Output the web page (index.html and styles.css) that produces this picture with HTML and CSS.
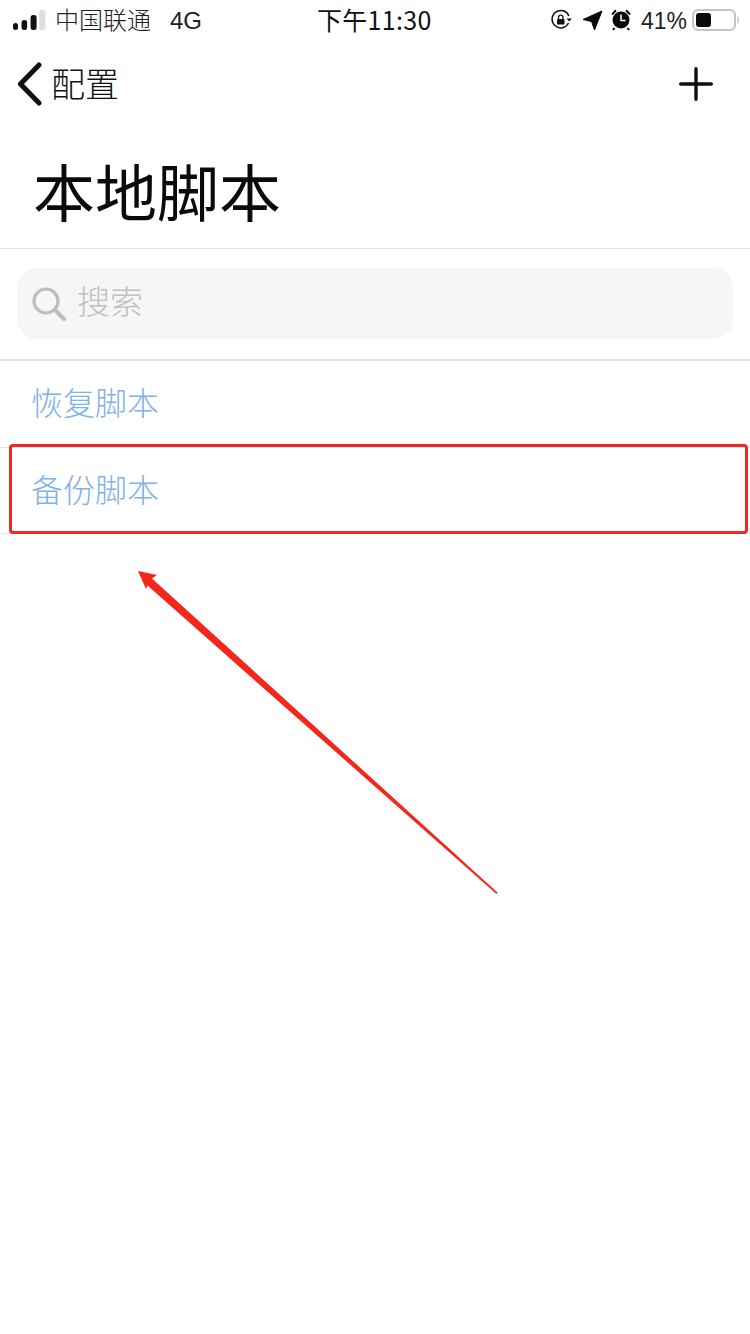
FILE: index.html
```html
<!DOCTYPE html>
<html lang="zh-CN">
<head>
<meta charset="utf-8">
<title>本地脚本</title>
<link rel="stylesheet" href="styles.css">
</head>
<body>
<main class="screen">
  <header class="status">
    <div class="status-left">
      <svg class="signal" width="34" height="22" viewBox="0 0 34 22"><rect x="0" y="13" width="5" height="7" rx="2.500" fill="#111"/><rect x="8.600" y="10" width="5.500" height="10" rx="2.500" fill="#111"/><rect x="17.600" y="5" width="6" height="15" rx="2.500" fill="#111"/><rect x="26.300" y="0" width="6" height="20" rx="2" fill="#dedede"/></svg>
      <span class="carrier">中国联通</span>
      <span class="net">4G</span>
    </div>
    <div class="time">下午11:30</div>
    <div class="status-right">
      <svg width="22" height="22" viewBox="0 0 22 22"><path d="M18.600 14A8.700 8.700 0 1 1 18.900 7" fill="none" stroke="#111" stroke-width="1.500"/><path d="M16.500 9.500h5.500l-2.800 3z" fill="#111"/><rect x="7" y="10" width="7.500" height="5.500" rx="1" fill="#111"/><path d="M8.500 10V8.300a2.200 2.200 0 0 1 4.500 0V10" fill="none" stroke="#111" stroke-width="1.300"/></svg>
      <svg class="loc" width="20" height="20" viewBox="0 0 20 20"><path d="M19 1 0 9.500l8.500 2 3 8.500z" fill="#0a0a0a" stroke="#0a0a0a" stroke-width="1" stroke-linejoin="round"/></svg>
      <svg class="alarm" width="20" height="24" viewBox="0 0 20 24"><circle cx="10" cy="12" r="8.500" fill="#0a0a0a"/><path d="M10 6.500v6h4.500" fill="none" stroke="#fff" stroke-width="1.500"/><path d="M1 6.500 5 2.200M19 6.500l-4-4.300M3.500 20 2 22M16.500 20l1.500 2" stroke="#0a0a0a" stroke-width="2"/></svg>
      <span class="pct">41%</span>
      <div class="battery"><div class="battery-level"></div></div>
      <div class="battery-cap"></div>
    </div>
  </header>

  <nav class="nav">
    <div class="back">
      <svg width="28" height="44" viewBox="0 0 28 44"><path d="M23 3 4.500 22 23 41" fill="none" stroke="#111" stroke-width="5" stroke-linecap="round" stroke-linejoin="round"/></svg>
      <span class="back-label">配置</span>
    </div>
    <svg class="plus" width="34" height="34" viewBox="0 0 34 34"><path d="M17 1.700v30.600M1.700 17h30.600" fill="none" stroke="#111" stroke-width="3.400" stroke-linecap="round"/></svg>
  </nav>

  <h1 class="title">本地脚本</h1>

  <section class="search-wrap">
    <div class="search">
      <svg width="34" height="34" viewBox="0 0 34 34"><circle cx="14" cy="14" r="12" fill="none" stroke="#bdbdbd" stroke-width="3.200"/><path d="M23 23l9 9" stroke="#bdbdbd" stroke-width="4" stroke-linecap="round"/></svg>
      <span class="search-text">搜索</span>
    </div>
  </section>

  <ul class="list">
    <li class="row">恢复脚本</li>
    <li class="row">备份脚本</li>
  </ul>

  <div class="highlight"></div>
  <svg class="arrow" width="750" height="1334" viewBox="0 0 750 1334"><polygon points="138,571 157,575 152,578.500 497.500,892.500 496.500,894 147.500,585.500 146,589" fill="#f5261c"/></svg>
</main>
</body>
</html>
```

FILE: styles.css
```css
* { box-sizing: border-box; }
html, body { margin: 0; padding: 0; background: #fff; }
body { font-family: "Noto Sans CJK SC", "Noto Sans", sans-serif; color: #111; }
.screen { position: relative; width: 750px; height: 1334px; overflow: hidden; background: #fff; }

.status { height: 40px; display: flex; align-items: center; justify-content: space-between; padding: 0 0 0 13px; }
.status-left { display: flex; align-items: center; width: 304px; }
.signal { margin-top: 1px; }
.carrier { font-size: 24px; line-height: 36px; margin-left: 8px; margin-bottom: 2px; color: #222; font-weight: 300; }
.net { font-family: "Liberation Sans", sans-serif; font-size: 24px; line-height: 36px; margin-left: 19px; margin-top: 1px; color: #222; }
.time { font-size: 25px; line-height: 36px; margin-bottom: 2px; letter-spacing: 0.3px; color: #111; white-space: nowrap; width: 115px; margin-right: auto; }
.status-right { display: flex; align-items: center; padding-right: 11px; }
.loc { margin-left: 11px; }
.alarm { margin-left: 8px; }
.pct { font-family: "Liberation Sans", sans-serif; font-size: 23px; margin-left: 10px; margin-top: 2px; color: #222; }
.battery { width: 44px; height: 22px; margin-left: 5px; border: 2px solid #c4c4c4; border-radius: 6px; padding: 2px; background: #fff; }
.battery-level { width: 15px; height: 14px; border-radius: 3px; background: #0a0a0a; }
.battery-cap { width: 2px; height: 8px; margin-left: 1px; background: #d8d8d8; border-radius: 0 2px 2px 0; }

.nav { height: 88px; display: flex; align-items: center; justify-content: space-between; padding: 0 37px 0 16px; }
.back { display: flex; align-items: center; }
.back-label { font-size: 34px; line-height: 44px; margin-left: 7px; margin-bottom: 2px; font-weight: 300; color: #111; }

.title { margin: 0; height: 121px; padding-left: 33px; font-size: 62px; line-height: 124px; font-weight: 400; color: #0a0a0a; border-bottom: 1px solid #e2e2e2; }

.search-wrap { height: 112px; padding: 19px 17px 0; border-bottom: 2px solid #e0e0e0; }
.search { height: 71px; border-radius: 20px; background: #f6f6f6; display: flex; align-items: center; padding-left: 15px; }
.search-text { font-size: 33px; line-height: 65px; margin-left: 11px; margin-bottom: 6px; color: #c0c0c0; font-weight: 300; }

.list { list-style: none; margin: 0; padding: 0; }
.row { height: 86.5px; padding-left: 31px; font-size: 32px; line-height: 80px; color: #7fb2e6; font-weight: 300; border-bottom: 1px solid #e6e6e6; }

.highlight { position: absolute; left: 9px; top: 444px; width: 739px; height: 90px; border: 3px solid #ec2a20; border-radius: 4px; }
.arrow { position: absolute; left: 0; top: 0; }
```
